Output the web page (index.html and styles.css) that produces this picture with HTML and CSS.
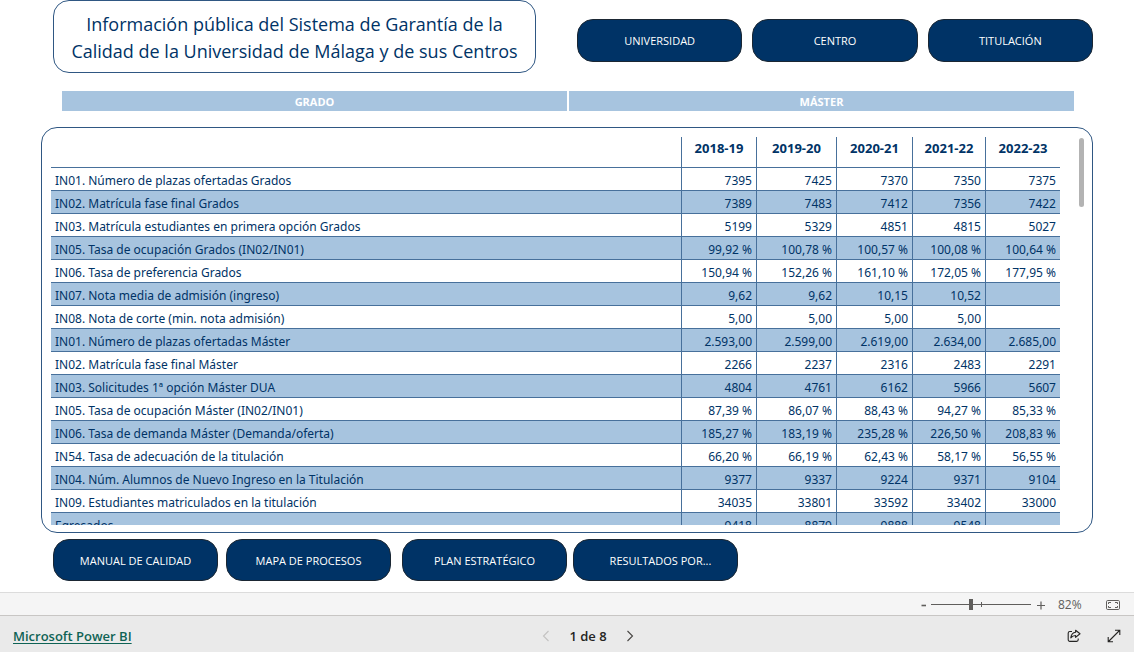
FILE: index.html
```
<!DOCTYPE html>
<html lang="es">
<head>
<meta charset="utf-8">
<meta name="viewport" content="width=device-width, initial-scale=1">
<title>Sistema de Garantía de la Calidad</title>
<link rel="stylesheet" href="styles.css">
</head>
<body>
<main class="report">
  <header class="top">
    <h1 class="title">Información pública del Sistema de Garantía de la Calidad de la Universidad de Málaga y de sus Centros</h1>
    <nav class="top-nav">
      <button class="pill" type="button">UNIVERSIDAD</button>
      <button class="pill" type="button">CENTRO</button>
      <button class="pill" type="button">TITULACIÓN</button>
    </nav>
  </header>
  <div class="tabs">
    <button class="tab" type="button">GRADO</button>
    <button class="tab" type="button">MÁSTER</button>
  </div>
  <section class="panel">
    <div class="viewport">
      <table class="matrix">
        <colgroup><col><col class="c1"><col class="c2"><col class="c3"><col class="c4"><col class="c5"></colgroup>
        <thead><tr><td></td><th>2018-19</th><th>2019-20</th><th>2020-21</th><th>2021-22</th><th>2022-23</th></tr></thead>
        <tbody>
          <tr><th>IN01. Número de plazas ofertadas Grados</th><td>7395</td><td>7425</td><td>7370</td><td>7350</td><td>7375</td></tr>
          <tr><th>IN02. Matrícula fase final Grados</th><td>7389</td><td>7483</td><td>7412</td><td>7356</td><td>7422</td></tr>
          <tr><th>IN03. Matrícula estudiantes en primera opción Grados</th><td>5199</td><td>5329</td><td>4851</td><td>4815</td><td>5027</td></tr>
          <tr><th>IN05. Tasa de ocupación Grados (IN02/IN01)</th><td>99,92 %</td><td>100,78 %</td><td>100,57 %</td><td>100,08 %</td><td>100,64 %</td></tr>
          <tr><th>IN06. Tasa de preferencia Grados</th><td>150,94 %</td><td>152,26 %</td><td>161,10 %</td><td>172,05 %</td><td>177,95 %</td></tr>
          <tr><th>IN07. Nota media de admisión (ingreso)</th><td>9,62</td><td>9,62</td><td>10,15</td><td>10,52</td><td></td></tr>
          <tr><th>IN08. Nota de corte (min. nota admisión)</th><td>5,00</td><td>5,00</td><td>5,00</td><td>5,00</td><td></td></tr>
          <tr><th>IN01. Número de plazas ofertadas Máster</th><td>2.593,00</td><td>2.599,00</td><td>2.619,00</td><td>2.634,00</td><td>2.685,00</td></tr>
          <tr><th>IN02. Matrícula fase final Máster</th><td>2266</td><td>2237</td><td>2316</td><td>2483</td><td>2291</td></tr>
          <tr><th>IN03. Solicitudes 1ª opción Máster DUA</th><td>4804</td><td>4761</td><td>6162</td><td>5966</td><td>5607</td></tr>
          <tr><th>IN05. Tasa de ocupación Máster (IN02/IN01)</th><td>87,39 %</td><td>86,07 %</td><td>88,43 %</td><td>94,27 %</td><td>85,33 %</td></tr>
          <tr><th>IN06. Tasa de demanda Máster (Demanda/oferta)</th><td>185,27 %</td><td>183,19 %</td><td>235,28 %</td><td>226,50 %</td><td>208,83 %</td></tr>
          <tr><th>IN54. Tasa de adecuación de la titulación</th><td>66,20 %</td><td>66,19 %</td><td>62,43 %</td><td>58,17 %</td><td>56,55 %</td></tr>
          <tr><th>IN04. Núm. Alumnos de Nuevo Ingreso en la Titulación</th><td>9377</td><td>9337</td><td>9224</td><td>9371</td><td>9104</td></tr>
          <tr><th>IN09. Estudiantes matriculados en la titulación</th><td>34035</td><td>33801</td><td>33592</td><td>33402</td><td>33000</td></tr>
          <tr><th>Egresados</th><td>9418</td><td>8879</td><td>9888</td><td>9548</td><td></td></tr>
        </tbody>
      </table>
    </div>
    <div class="scroll"><div class="scroll-thumb"></div></div>
  </section>
  <nav class="bottom-nav">
    <button class="pill" type="button">MANUAL DE CALIDAD</button>
    <button class="pill" type="button">MAPA DE PROCESOS</button>
    <button class="pill" type="button">PLAN ESTRATÉGICO</button>
    <button class="pill pill-menu" type="button">RESULTADOS POR...</button>
  </nav>
</main>
<div class="zoombar">
  <button class="icon-btn" type="button" aria-label="Alejar"><svg width="6" height="12" viewBox="0 0 6 12"><path d="M0.5 6.5h4.5" stroke="#605e5c" stroke-width="1.6"/></svg></button>
  <div class="slider-wrap"><input class="slider" type="range" min="0" max="100" value="40" aria-label="Zoom"><span class="tick"></span></div>
  <button class="icon-btn" type="button" aria-label="Acercar"><svg width="8" height="12" viewBox="0 0 8 12"><path d="M0 6.5h8M4 2.5v8" stroke="#605e5c" stroke-width="1.2"/></svg></button>
  <span class="zoom-value">82%</span>
  <button class="icon-btn" type="button" aria-label="Ajustar a la página"><svg width="14" height="12" viewBox="0 0 14 12" fill="none" stroke="#605e5c"><rect x="0.5" y="1.5" width="13" height="9" rx="1.2"/><path d="M5 3.5H2.5V5M2.5 7v1.5H5M9 3.5h2.5V5M11.5 7v1.5H9"/></svg></button>
</div>
<footer class="footer">
  <div class="brand"><a href="#">Microsoft Power BI</a></div>
  <div class="pager">
    <button class="icon-btn" type="button" disabled aria-label="Página anterior"><svg width="8" height="12" viewBox="0 0 8 12" fill="none" stroke="#c3c2c1" stroke-width="1.1"><path d="M6.5 1 1.5 6l5 5"/></svg></button>
    <span class="page">1 de 8</span>
    <button class="icon-btn" type="button" aria-label="Página siguiente"><svg width="8" height="12" viewBox="0 0 8 12" fill="none" stroke="#484644" stroke-width="1.1"><path d="M1.5 1l5 5-5 5"/></svg></button>
  </div>
  <div class="actions">
    <button class="icon-btn" type="button" aria-label="Compartir"><svg width="14" height="14" viewBox="0 0 14 14" fill="none" stroke="#252423" stroke-width="1.1" stroke-linejoin="round"><path d="M5 2.5H2.8A1.6 1.6 0 0 0 1.2 4v6.8a1.6 1.6 0 0 0 1.6 1.6h6.8a1.6 1.6 0 0 0 1.6-1.6V9.6"/><path d="M8.6 1.2 13 4.8 8.6 8.4V6.5C6.6 6.5 5.2 7 3.8 8.8 4.2 5.7 5.8 3.5 8.6 3.2Z"/></svg></button>
    <button class="icon-btn" type="button" aria-label="Pantalla completa"><svg width="14" height="14" viewBox="0 0 14 14" fill="none" stroke="#252423" stroke-width="1.1"><path d="M1.5 12.5l11-11M8 1.2h4.8V6M1.2 8v4.8H6"/></svg></button>
  </div>
</footer>
</body>
</html>
```
FILE: styles.css
```
* { box-sizing: border-box; }
body {
  margin: 0;
  height: 100vh;
  display: flex;
  flex-direction: column;
  background: #fff;
  color: #003366;
  font: 12px/16px "Segoe UI", "Open Sans", "Noto Sans", sans-serif;
}
button { font: inherit; cursor: pointer; }
.report {
  flex: 1;
  min-height: 0;
  display: flex;
  flex-direction: column;
  padding: 0 41px 11px;
}
.top {
  display: grid;
  grid-template-columns: 483fr 516fr;
  align-items: start;
  column-gap: 41px;
  padding-left: 12px;
}
.title {
  margin: 0;
  padding: 10px 10px 7px;
  border: 1px solid #2f5783;
  border-radius: 16px;
  font-size: 18px;
  line-height: 27px;
  font-weight: 400;
  text-align: center;
}
.top-nav {
  display: flex;
  gap: 10px;
  padding-top: 19px;
}
.pill {
  height: 42px;
  padding: 2px 0 0;
  border: 1px solid #1b2733;
  border-radius: 16px;
  background: #003366;
  color: #fff;
  font-size: 11px;
}
.top-nav .pill { flex: 1; height: 43px; padding: 0; }
.tabs {
  display: flex;
  gap: 2px;
  margin: 18px 19px 16px 21px;
}
.tab {
  flex: 1;
  height: 20px;
  padding: 2px 0 0;
  border: 0;
  background: #a7c4df;
  color: #fff;
  font-size: 11px;
  font-weight: 700;
}
.panel {
  flex: 1;
  min-height: 0;
  display: flex;
  justify-content: space-between;
  padding: 9px 8px 7px 9px;
  border: 1px solid #2f5783;
  border-radius: 16px;
}
.viewport {
  flex: 1;
  overflow: hidden;
  margin-right: 19px;
}
.matrix {
  width: 100%;
  table-layout: fixed;
  border-collapse: separate;
  border-spacing: 0;
  font-family: "Segoe UI", "Noto Sans", sans-serif;
}
.c1 { width: 75px; }
.c2 { width: 80px; }
.c3 { width: 76px; }
.c4 { width: 73px; }
.c5 { width: 74px; }
.matrix th, .matrix td {
  height: 23px;
  padding: 4px 4px 0;
  border-bottom: 1px solid #47709b;
  border-right: 1px solid #47709b;
  text-align: right;
  font-weight: 400;
  white-space: nowrap;
}
.matrix tbody th { text-align: left; }
.matrix tr > :last-child { border-right: 0; }
.matrix thead th, .matrix thead td {
  height: 31px;
  padding: 0 0 8px;
  text-align: center;
  font-size: 13px;
  font-weight: 700;
}
.matrix tbody tr:nth-child(even) { background: #a7c4df; }
.scroll { width: 5px; }
.scroll-thumb {
  height: 69px;
  margin-top: 1px;
  border-radius: 3px;
  background: #b3b3b3;
}
.bottom-nav {
  display: grid;
  grid-template-columns: 173fr 176fr 171fr 165fr 355fr;
  margin-top: 6px;
  padding-left: 12px;
}
.bottom-nav .pill { width: 165px; }
.bottom-nav .pill-menu { padding-left: 10px; }
.zoombar {
  display: flex;
  align-items: center;
  justify-content: flex-end;
  height: 23px;
  padding: 1px 14px 0 0;
  border-top: 1px solid #dcdcdc;
  background: #f5f5f5;
  color: #605e5c;
}
.icon-btn {
  display: flex;
  padding: 0;
  border: 0;
  background: none;
}
.slider-wrap {
  position: relative;
  display: flex;
  width: 100px;
  margin: 0 6px 0 4px;
}
.slider {
  appearance: none;
  width: 100%;
  height: 11px;
  margin: 0;
  background: linear-gradient(#605e5c, #605e5c) center / 100% 1px no-repeat;
}
.slider::-webkit-slider-thumb {
  appearance: none;
  width: 4px;
  height: 11px;
  background: #605e5c;
}
.tick {
  position: absolute;
  left: 50%;
  top: 3px;
  width: 1px;
  height: 5px;
  background: #605e5c;
}
.zoom-value { width: 24px; margin: 0 24px 0 13px; }
.footer {
  display: grid;
  grid-template-columns: 1fr auto 1fr;
  align-items: center;
  height: 37px;
  padding: 3px 13px 0;
  border-top: 1px solid #c8c6c4;
  background: #eaeaea;
  color: #252423;
  font-size: 13px;
  line-height: 18px;
  font-weight: 600;
}
.brand a {
  color: #0f6355;
  text-underline-offset: 2px;
}
.pager {
  display: flex;
  align-items: center;
  gap: 19px;
  padding-left: 42px;
}
.actions {
  display: flex;
  justify-content: flex-end;
  gap: 26px;
}
```
